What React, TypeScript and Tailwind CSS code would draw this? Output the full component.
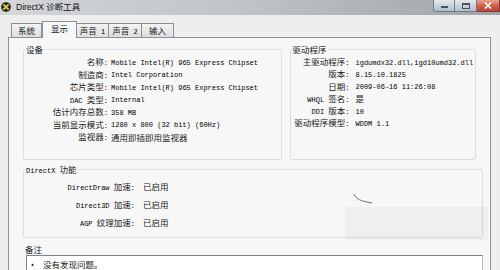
const cjk = "font-['Noto_Sans_CJK_SC',sans-serif] text-[8.5px] leading-none";
const mono = "font-['Liberation_Mono','Noto_Sans_CJK_SC',monospace] text-[7px] leading-none text-black";
const CJK_RE = /([\u3000-\u303f\u4e00-\u9fff\uff00-\uffef]+)/;

function Txt({ text }: { text: string }) {
  return (
    <span>
      {text
        .split(CJK_RE)
        .filter(Boolean)
        .map((part, i) =>
          CJK_RE.test(part) ? (
            <span key={i} className={cjk}>
              {part}
            </span>
          ) : (
            <span key={i} className={mono}>
              {part}
            </span>
          ),
        )}
    </span>
  );
}

const deviceRows = [
  ['名称', 'Mobile Intel(R) 965 Express Chipset'],
  ['制造商', 'Intel Corporation'],
  ['芯片类型', 'Mobile Intel(R) 965 Express Chipset'],
  ['DAC 类型', 'Internal'],
  ['估计内存总数', '358 MB'],
  ['当前显示模式', '1280 x 800 (32 bit) (60Hz)'],
  ['监视器', '通用即插即用监视器'],
];

const driverRows = [
  ['主驱动程序', 'igdumdx32.dll,igd10umd32.dll'],
  ['版本', '8.15.10.1825'],
  ['日期', '2009-06-16 11:26:08'],
  ['WHQL 签名', '是'],
  ['DDI 版本', '10'],
  ['驱动程序模型', 'WDDM 1.1'],
];

const featureRows = [
  ['DirectDraw 加速', '已启用'],
  ['Direct3D 加速', '已启用'],
  ['AGP 纹理加速', '已启用'],
];

const tabs = [
  { name: '系统', width: 'w-[31px]' },
  { name: '显示', width: 'w-[35px]', active: true },
  { name: '声音 1', width: 'w-[32px]' },
  { name: '声音 2', width: 'w-[33px]' },
  { name: '输入', width: 'w-[32px]' },
];

export default function App() {
  return (
    <div className="relative h-[270px] w-[500px] overflow-hidden bg-[#eeeeee] text-[8.5px] leading-none text-[#1a1a1a]">
      <TitleBar />

      <div className="px-[8px] pt-[7px]">
        <div className="flex h-[15px] items-end pl-[3px]">
          {tabs.map((tab) => (
            <div
              key={tab.name}
              className={
                tab.active
                  ? `${tab.width} relative z-10 -mb-px flex h-[17px] items-center justify-center border border-b-0 border-[#8c8f96] bg-[#f7f7f7] pb-[2px]`
                  : `${tab.width} flex h-[14px] items-center justify-center border border-b-0 border-l-0 border-[#8c8f96] bg-gradient-to-b from-[#f3f3f3] to-[#dedede] first:border-l`
              }
            >
              <Txt text={tab.name} />
            </div>
          ))}
        </div>

        <div className="h-[240px] w-[483px] border border-[#8c8f96] bg-[#f7f7f7] px-[14px] pt-[6px]">
          <div className="flex gap-[8px]">
            <GroupBox title="设备" className="h-[116px] w-[262px]">
              <div className="pt-px">
                {deviceRows.map(([label, value]) => (
                  <div key={label} className="flex h-[12.5px] items-center whitespace-nowrap">
                    <div className="w-[84px] shrink-0 text-right">
                      <Txt text={label} />
                      <span className={mono}>:</span>
                    </div>
                    <div className="ml-[3px]">
                      <Txt text={value} />
                    </div>
                  </div>
                ))}
              </div>
            </GroupBox>

            <GroupBox title="驱动程序" className="h-[116px] w-[189px]">
              <div className="pt-px">
                {driverRows.map(([label, value]) => (
                  <div key={label} className="flex h-[12.25px] items-center whitespace-nowrap">
                    <div className="w-[59px] shrink-0 text-right">
                      <Txt text={label} />
                      <span className={mono}>:</span>
                    </div>
                    <div className="ml-[6px]">
                      <Txt text={value} />
                    </div>
                  </div>
                ))}
              </div>
            </GroupBox>
          </div>

          <GroupBox title="DirectX 功能" className="mt-[4px] h-[74px] w-[460px]">
            <div className="pt-[3px]">
              {featureRows.map(([label, value]) => (
                <div key={label} className="flex h-[18px] items-center whitespace-nowrap">
                  <div className="w-[111px] shrink-0 text-right">
                    <Txt text={label} />
                    <span className={mono}>:</span>
                  </div>
                  <div className="ml-[8px]">
                    <Txt text={value} />
                  </div>
                </div>
              ))}
            </div>
          </GroupBox>

          <div className="mt-[7px] pl-[2px] leading-[9px]">
            <Txt text="备注" />
          </div>
          <div className="ml-[3px] mt-[1px] h-[30px] w-[457px] border border-[#b5b9bf] border-l-[#7e838a] border-t-[#7e838a] bg-white pl-[4px] pt-[4px]">
            <div className="flex items-center">
              <span className="text-[8px] leading-none">•</span>
              <span className="ml-[9px]">
                <Txt text="没有发现问题。" />
              </span>
            </div>
          </div>
        </div>
      </div>

      {/* cursor trace and watermark patch in the screenshot */}
      <svg className="absolute left-[352px] top-[192px]" width="24" height="14" viewBox="0 0 24 14">
        <path d="M2 2 C4 7 8 9 20 11" fill="none" stroke="#6b6b6b" strokeWidth="1" />
      </svg>
      <div className="absolute left-[345px] top-[207px] h-[33px] w-[143px] bg-black/[0.03]" />
    </div>
  );
}

function GroupBox({
  title,
  className,
  children,
}: {
  title: string;
  className: string;
  children: React.ReactNode;
}) {
  return (
    <fieldset className={`rounded-[2px] border border-[#d5dfe5] ${className}`}>
      <legend className="ml-[1px] px-[1px] leading-[11px]">
        <Txt text={title} />
      </legend>
      {children}
    </fieldset>
  );
}

function TitleBar() {
  return (
    <div className="flex h-[15px] items-start bg-gradient-to-r from-[#d4d6d8] via-[#bfc3c7] to-[#9fa4aa]">
      <svg className="ml-px mt-[2px]" width="10" height="10" viewBox="0 0 10 10">
        <circle cx="5" cy="5" r="4.8" fill="#1b1b1b" />
        <path d="M2.3 2.3 L7.7 7.7 M7.7 2.3 L2.3 7.7" stroke="#e3d23a" strokeWidth="1.8" />
      </svg>
      <span className="ml-[5px] mt-[2px] font-['Liberation_Sans','Noto_Sans_CJK_SC',sans-serif] text-[8.5px] leading-[10px] text-[#111]">
        DirectX 诊断工具
      </span>
      <div className="ml-auto flex h-[12px]">
        <div className="flex w-[22px] items-center justify-center rounded-bl-[3px] border border-t-0 border-[#6f7a86] bg-gradient-to-b from-[#e3e8ee] to-[#b4bfca]">
          <span className="mt-[2px] h-[2px] w-[7px] border border-[#4a525b] bg-white" />
        </div>
        <div className="flex w-[22px] items-center justify-center border border-l-0 border-t-0 border-[#6f7a86] bg-gradient-to-b from-[#e3e8ee] to-[#b4bfca]">
          <span className="h-[6px] w-[8px] border-[1.5px] border-t-[2px] border-[#4a525b] bg-transparent" />
        </div>
        <div className="flex w-[23px] items-center justify-center border border-l-0 border-t-0 border-[#7d3a2e] bg-gradient-to-b from-[#eaa08f] via-[#d0604b] to-[#c2452f]">
          <svg width="8" height="7" viewBox="0 0 8 7">
            <path d="M1 0.5 L7 6.5 M7 0.5 L1 6.5" stroke="#fff" strokeWidth="1.6" />
          </svg>
        </div>
      </div>
    </div>
  );
}
